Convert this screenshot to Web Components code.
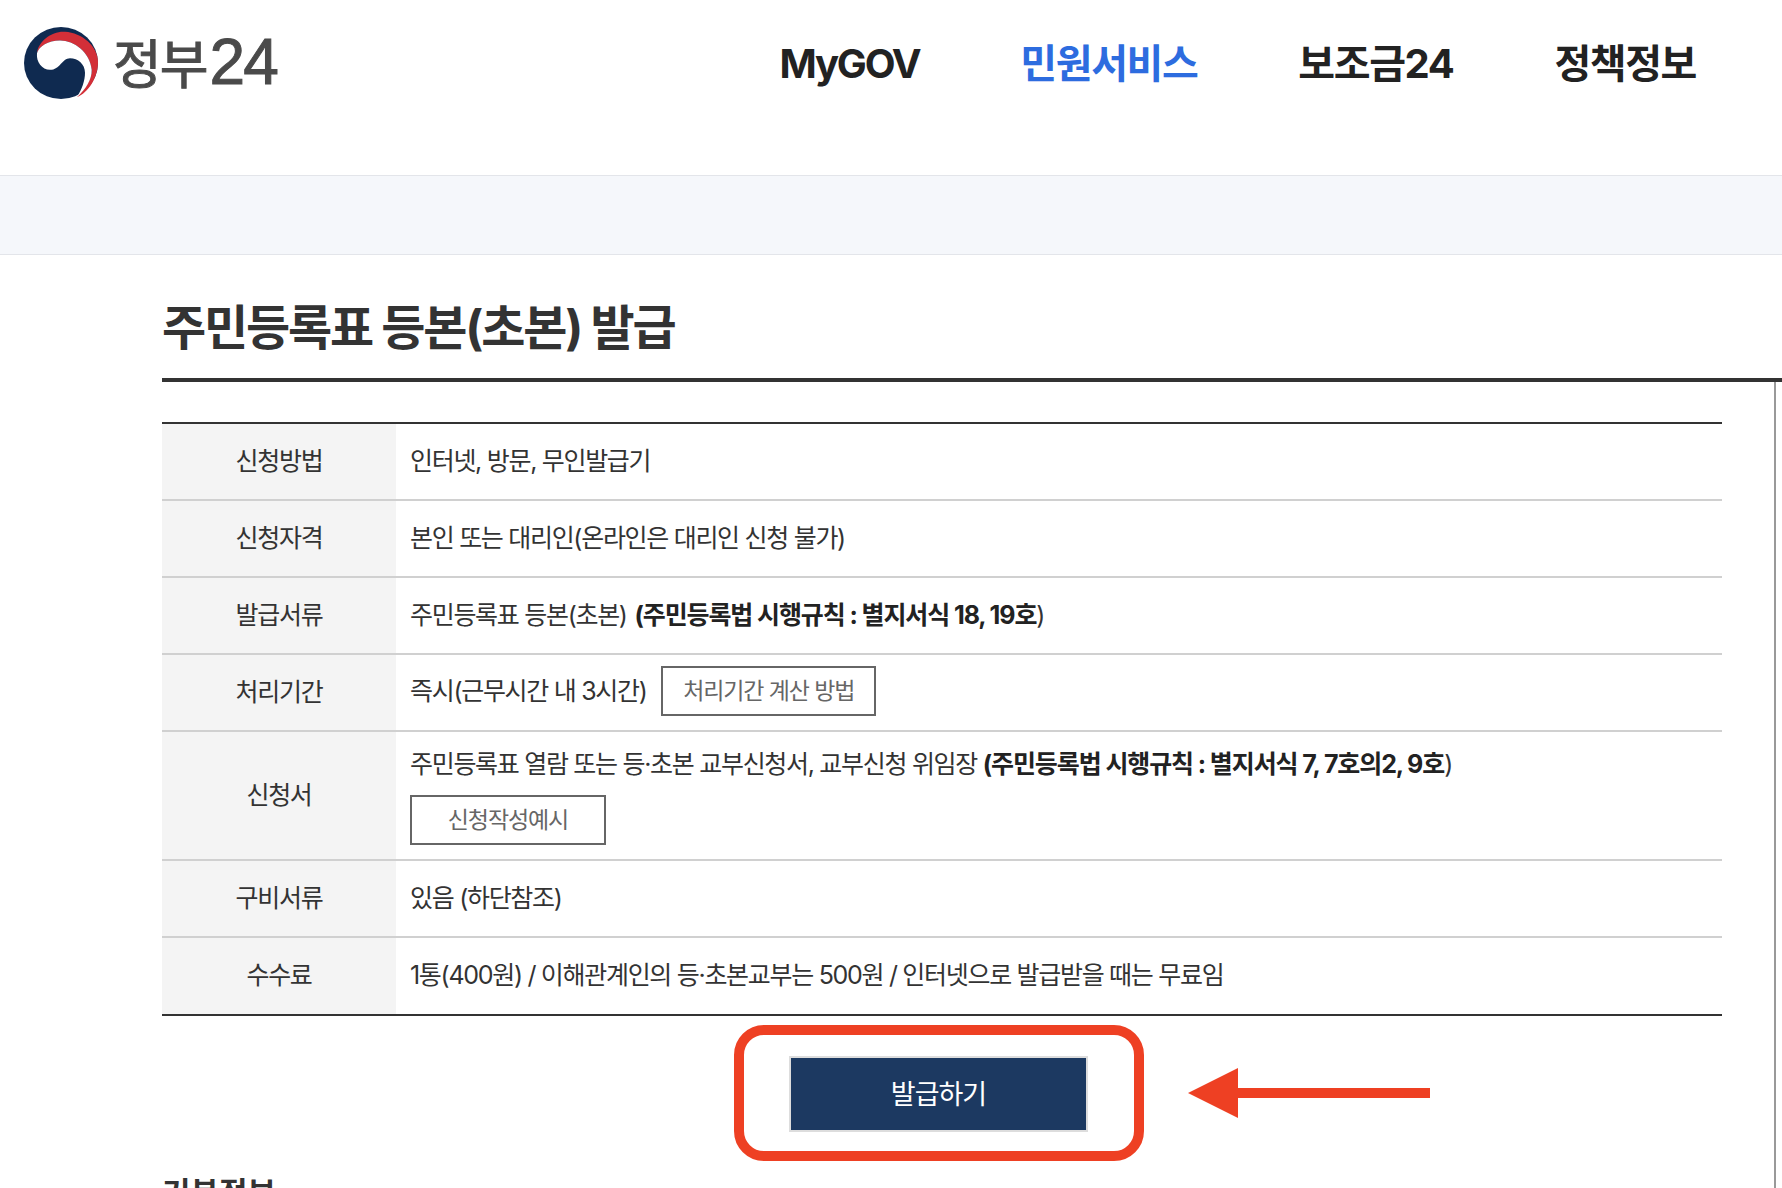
<!doctype html>
<html lang="ko">
<head>
<meta charset="utf-8">
<title>주민등록표 등본(초본) 발급</title>
<style>
  html, body { margin: 0; padding: 0; background: #fff; }
  body { width: 1782px; height: 1188px; overflow: hidden; font-family: Inter, "Noto Sans CJK KR", sans-serif; color: #333; }
  strong { font-weight: 700; color: #222; letter-spacing: -1.1px; }
</style>
</head>
<body>
<gov-header></gov-header>
<sub-band></sub-band>
<service-page heading="주민등록표 등본(초본) 발급">
  <info-row label="신청방법">인터넷, 방문, 무인발급기</info-row>
  <info-row label="신청자격">본인 또는 대리인(온라인은 대리인 신청 불가)</info-row>
  <info-row label="발급서류">주민등록표 등본(초본) <strong style="margin-left:2px">(주민등록법 시행규칙 : 별지서식 18, 19호</strong>)</info-row>
  <info-row label="처리기간" lift>즉시(근무시간 내 3시간) <line-button style="width:215px;margin-left:9px">처리기간 계산 방법</line-button></info-row>
  <info-row label="신청서" tall>주민등록표 열람 또는 등·초본 교부신청서, 교부신청 위임장 <strong>(주민등록법 시행규칙 : 별지서식 7, 7호의2, 9호</strong>)<br><line-button style="width:196px;margin-top:14px">신청작성예시</line-button></info-row>
  <info-row label="구비서류">있음 (하단참조)</info-row>
  <info-row label="수수료">1통(400원) / 이해관계인의 등·초본교부는 500원 / 인터넷으로 발급받을 때는 무료임</info-row>
</service-page>
<script>
const define_el = (name, html, connected) => {
  class El extends HTMLElement {
    constructor() {
      super()
      this.attachShadow({ mode: 'open' }).innerHTML = html
    }
    connectedCallback() {
      if (connected) connected(this)
    }
  }
  customElements.define(name, El)
}

define_el('gov-header', `
  <style>
    :host { display: flex; align-items: flex-start; justify-content: space-between; height: 175px; border-bottom: 1px solid #e3e5ea; }
    .logo { display: flex; align-items: center; gap: 15px; padding: 27px 0 0 24px; }
    svg { width: 74px; height: 72px; display: block; }
    .word { font-size: 53px; line-height: 68px; color: #4a4a4a; letter-spacing: -2px; -webkit-text-stroke: 1px #4a4a4a; margin-top: 1px; }
    .word span { font-family: "Liberation Sans", sans-serif; font-size: 64px; letter-spacing: -2px; margin-left: 3px; }
    nav { display: flex; gap: 101px; padding: 35px 86px 0 0; font-size: 40px; line-height: 58px; font-weight: 700; color: #222; letter-spacing: -1.4px; }
    .en { letter-spacing: -2.2px; }
    .on { color: #2d6cdf; }
  </style>
  <div class="logo">
    <svg viewBox="0 0 74 74" preserveAspectRatio="none" aria-hidden="true">
      <circle cx="37" cy="37" r="37" fill="#0f2a50"/>
      <path fill="#d32f38" d="M13 27C14 15 28 4 41 5C58 6 74 20 74 36C74 52 64 68 53 72C62 62 68 54 67.7 44C66 26 50 14 36 14C24 14 15 20 13 27Z"/>
      <path fill="#fff" d="M13 27C15 20 24 14 36 14C50 14 66 26 67.7 44C68 54 62 64 53 72C58 64 61 55 61 47C61 38 54 32 46 32C38 32 36 44 26 44C18 44 12 36 13 27Z"/>
    </svg>
    <div class="word">정부<span>24</span></div>
  </div>
  <nav><span class="en">MyGOV</span><span class="on">민원서비스</span><span>보조금24</span><span>정책정보</span></nav>
`)

define_el('sub-band', `
  <style>
    :host { display: block; height: 78px; background: #f5f7fb; border-bottom: 1px solid #e3e5ea; }
  </style>
`)

define_el('service-page', `
  <style>
    :host { display: block; position: relative; }
    h1 { margin: 0 0 0 162px; height: 127px; box-sizing: border-box; padding-top: 40px; border-bottom: 4px solid #333; font-size: 48px; line-height: 66px; font-weight: 700; color: #333; letter-spacing: -2.15px; }
    .body { margin-right: 6px; border-right: 2px solid #999; padding: 40px 52px 0 162px; height: 820px; box-sizing: border-box; }
    .table { border-top: 2px solid #333; border-bottom: 2px solid #333; }
    .action { display: flex; padding: 40px 0 0 627px; position: relative; }
    .next { font-size: 31px; line-height: 44px; font-weight: 700; color: #333; margin-top: 39px; letter-spacing: 0; }
    .go { width: 299px; height: 76px; box-sizing: border-box; border: 2px solid #ddd; background: #1c3961; color: #fff; font: inherit; font-size: 27px; letter-spacing: -1px; padding: 0 0 4px; }
    .frame { position: absolute; left: 572px; top: 9px; width: 410px; height: 136px; box-sizing: border-box; border: 10px solid #ee4023; border-radius: 30px; }
    .arrow { position: absolute; left: 1026px; top: 52px; width: 242px; height: 50px; }
  </style>
  <h1 id="h"></h1>
  <div class="body">
    <div class="table"><slot></slot></div>
    <div class="action">
      <button class="go">발급하기</button>
      <div class="frame"></div>
      <svg class="arrow" viewBox="0 0 242 50" aria-hidden="true"><path fill="#ee4023" d="M0 25L50 0V20H242V30H50V50Z"/></svg>
    </div>
    <div class="next">기본정보</div>
  </div>
`, el => { el.shadowRoot.getElementById('h').textContent = el.getAttribute('heading') })

define_el('info-row', `
  <style>
    :host { display: grid; grid-template-columns: 234px 1fr; min-height: 75px; border-bottom: 2px solid #d0d0d0; font-size: 25px; line-height: 34px; letter-spacing: -1.3px; color: #333; }
    :host(:last-child) { border-bottom: 0; min-height: 76px; }
    .lab { background: #f4f4f4; display: flex; align-items: center; justify-content: center; padding-bottom: 2px; }
    .val { display: flex; align-items: center; padding: 0 0 2px 14px; white-space: pre-wrap; }
    :host([lift]) .val { padding-bottom: 4px; }
    :host([tall]) .val { display: block; white-space: normal; padding: 15px 0 14px 14px; }
  </style>
  <div class="lab" id="l"></div>
  <div class="val"><slot></slot></div>
`, el => { el.shadowRoot.getElementById('l').textContent = el.getAttribute('label') })

define_el('line-button', `
  <style>
    :host { display: inline-flex; align-items: center; justify-content: center; height: 50px; box-sizing: border-box; border: 2px solid #666; color: #666; font-size: 23px; letter-spacing: -1.1px; vertical-align: middle; }
  </style>
  <slot></slot>
`)
</script>
</body>
</html>
